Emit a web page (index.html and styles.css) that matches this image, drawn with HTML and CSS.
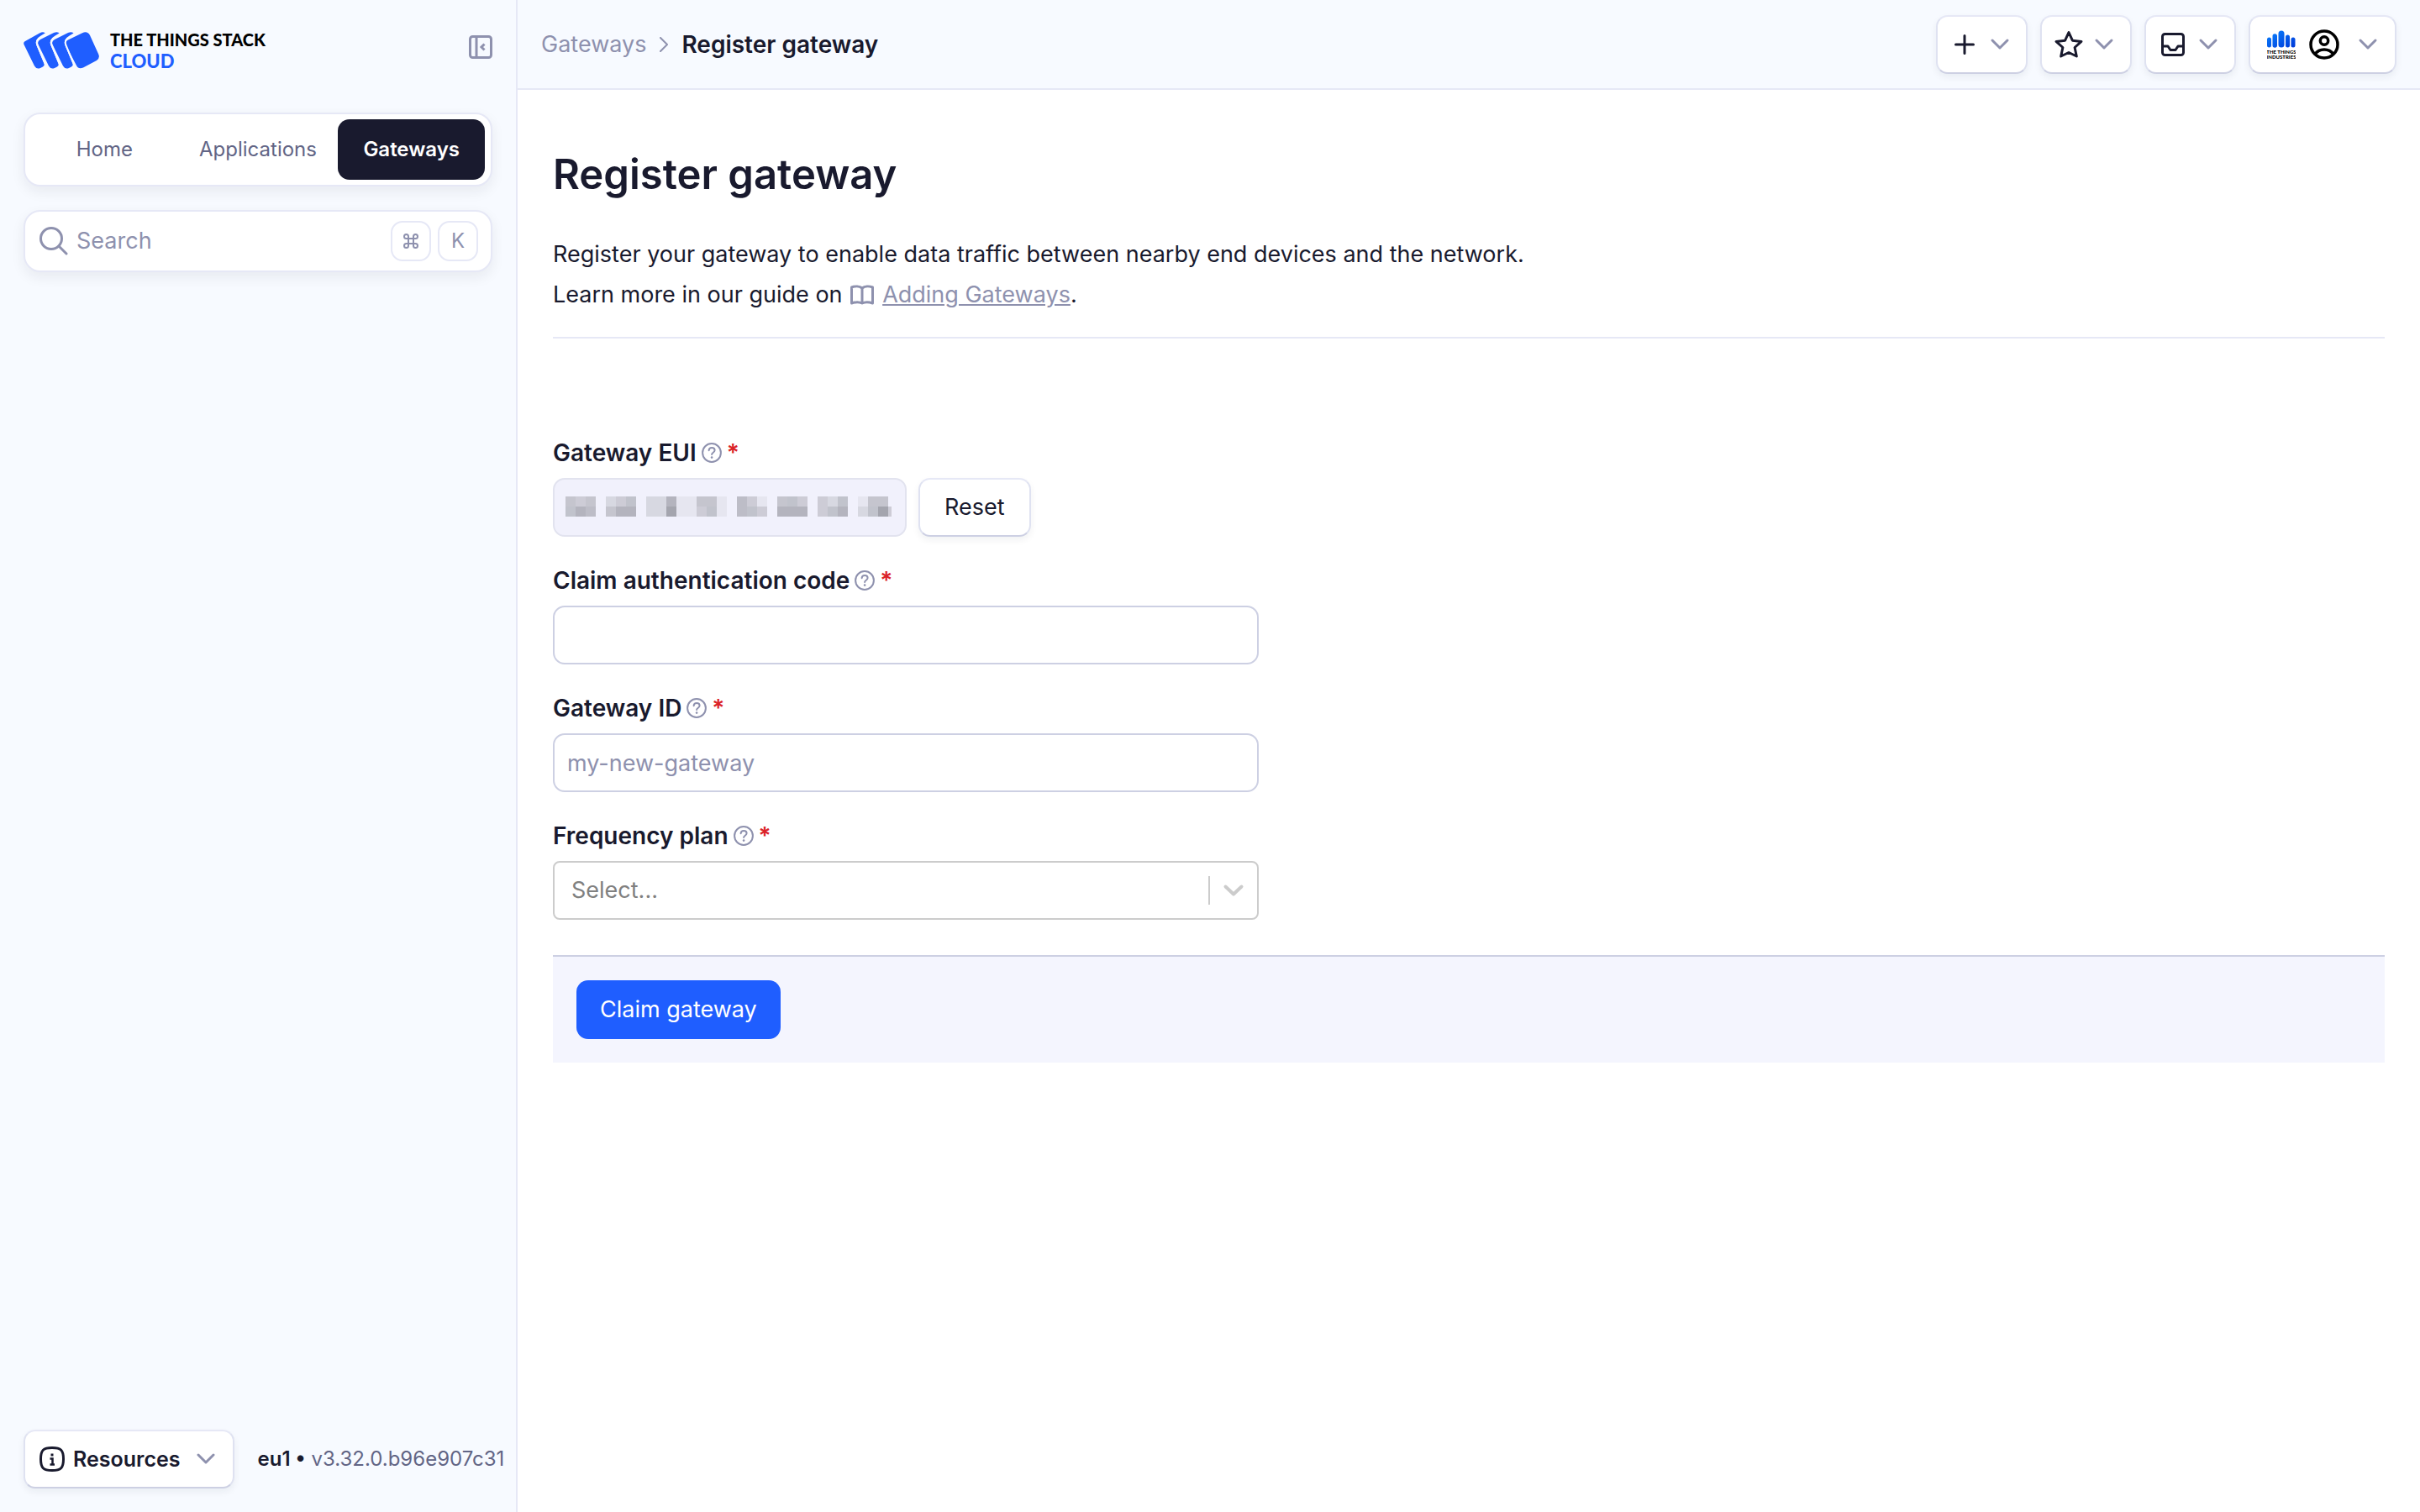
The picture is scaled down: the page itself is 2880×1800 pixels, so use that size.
FILE: index.html
```html
<!DOCTYPE html>
<html lang="en">
<head>
<meta charset="utf-8">
<meta name="viewport" content="width=device-width, initial-scale=1">
<title>Register gateway - The Things Stack Cloud</title>
<link rel="stylesheet" href="styles.css">
</head>
<body>
<svg class="defs" aria-hidden="true">
  <symbol id="chevron" viewBox="0 0 24 24"><path d="M3 7l9 9 9-9" fill="none" stroke="currentColor" stroke-width="3" stroke-linecap="round" stroke-linejoin="round"/></symbol>
  <symbol id="help" viewBox="0 0 24 24"><circle cx="12" cy="12" r="10.900" fill="none" stroke="currentColor" stroke-width="2"/><path d="M8.600 9.200c.2-2 1.600-3.100 3.500-3.100s3.500 1.200 3.500 3c0 2.600-3.500 2.700-3.500 5" fill="none" stroke="currentColor" stroke-width="2" stroke-linecap="round"/><circle cx="12.100" cy="17.600" r="1.300" fill="currentColor"/></symbol>
</svg>
<div class="layout">
  <aside class="sidebar">
    <div class="brand-row">
      <a class="brand" href="#">
        <svg class="brand-mark" viewBox="0 0 90 44" aria-hidden="true">
          <g fill="#1f5eff">
            <path d="M2 11L19 1.500Q24-1 26.500 2L19 6.500Q13 10 15.500 16L24.500 37.500Q25.500 40 23 41.500L20 43Q15.500 45 13 40.500L1 16Q-1 12.500 2 11Z"/>
            <path d="M20 9L36 1Q41-1 43 2L36 6.500Q30 10 32.500 16L41.500 37.500Q42.500 40 40 41.500L37 43Q32.500 45 30 40.500L18 16Q15.500 11.500 20 9Z"/>
            <path d="M37 9L53 1Q58-1 60 2L53 6.500Q47 10 49.500 16L58.500 37.500Q59.500 40 57 41.500L54 43Q49.500 45 47 40.500L35 16Q32.500 11.500 37 9Z"/>
            <path d="M53 9.500L70 1.200Q76-1.500 79 4L89 26Q91.500 31 87 34L71 42.500Q65.500 45 63 40L50.500 16Q48 12 53 9.500Z"/>
          </g>
          <g fill="none" stroke="#f7faff" stroke-width="2">
            <path d="M28 1L20 6Q14 9.500 16.500 16L26.500 40"/>
            <path d="M45 1L37 6Q31 9.500 33.500 16L43.500 40"/>
            <path d="M62 1L54 6Q48 9.500 50.500 16L60.500 40"/>
          </g>
        </svg>
        <span class="brand-name"><span>THE THINGS STACK</span><span class="brand-sub">CLOUD</span></span>
      </a>
      <button class="icon-button" type="button" aria-label="Collapse sidebar">
        <svg width="28" height="28" viewBox="0 0 28 28" fill="none" stroke="currentColor" stroke-width="3"><rect x="1.500" y="1.500" width="25" height="25" rx="3"/><path d="M9 2v24"/><path d="M18.500 10.500L15 14l3.500 3.500"/></svg>
      </button>
    </div>
    <nav class="tabs">
      <a href="#">Home</a><a href="#">Applications</a><a class="active" href="#">Gateways</a>
    </nav>
    <label class="search">
      <svg width="34" height="34" viewBox="0 0 34 34" fill="none" stroke="currentColor" stroke-width="3" stroke-linecap="round"><circle cx="14" cy="14" r="12.500"/><path d="M23 23l9 9"/></svg>
      <input type="text" placeholder="Search" aria-label="Search">
      <kbd><svg width="18" height="18" viewBox="0 0 18 18" fill="none" stroke="currentColor" stroke-width="2"><path d="M6 6V3.500A2.500 2.500 0 1 0 3.500 6h11A2.500 2.500 0 1 0 12 3.500v11A2.500 2.500 0 1 0 14.500 12h-11A2.500 2.500 0 1 0 6 14.500Z"/></svg></kbd>
      <kbd>K</kbd>
    </label>
    <footer class="side-foot">
      <button class="card-button resources" type="button">
        <svg width="30" height="30" viewBox="0 0 30 30" fill="none" stroke="currentColor" stroke-width="3"><path d="M15 1.500C25.500 1.500 28.500 4.500 28.500 15S25.500 28.500 15 28.500 1.500 25.500 1.500 15 4.500 1.500 15 1.500Z"/><path d="M12.500 14.500h3v7M12.500 21.500h5.500" stroke-width="2.500"/><path d="M15 8.500v3"/></svg>
        <span>Resources</span>
        <svg class="chev"><use href="#chevron"/></svg>
      </button>
      <p class="version"><b>eu1 •</b> v3.32.0.b96e907c31</p>
    </footer>
  </aside>

  <div class="page">
    <header class="topbar">
      <nav class="crumbs" aria-label="Breadcrumb">
        <a href="#">Gateways</a>
        <svg width="10" height="18" viewBox="0 0 10 18" fill="none" stroke="currentColor" stroke-width="2" stroke-linecap="round" stroke-linejoin="round"><path d="M1 1l8 8-8 8"/></svg>
        <span>Register gateway</span>
      </nav>
      <div class="actions">
        <button class="card-button" type="button" aria-label="Add">
          <svg width="36" height="36" viewBox="0 0 36 36" fill="none" stroke="currentColor" stroke-width="3" stroke-linecap="round"><path d="M18 7.500v21M7.500 18h21"/></svg>
          <svg class="chev"><use href="#chevron"/></svg>
        </button>
        <button class="card-button" type="button" aria-label="Bookmarks">
          <svg width="36" height="36" viewBox="0 0 36 36" fill="none" stroke="currentColor" stroke-width="3" stroke-linejoin="round"><path d="M18 3.500l4.400 9.700 10.600 1.200-7.900 7.100 2.200 10.500-9.300-4.500-9.300 4.500 2.200-10.500-7.900-7.100 10.600-1.200z"/></svg>
          <svg class="chev"><use href="#chevron"/></svg>
        </button>
        <button class="card-button" type="button" aria-label="Notifications">
          <svg width="36" height="36" viewBox="0 0 36 36" fill="none" stroke="currentColor" stroke-width="3" stroke-linejoin="round"><rect x="5.500" y="5.500" width="25" height="25" rx="3"/><path d="M6 20h6l3 4.500h6l3-4.500h6"/></svg>
          <svg class="chev"><use href="#chevron"/></svg>
        </button>
        <button class="card-button account" type="button" aria-label="Account">
          <svg width="34" height="34" viewBox="0 0 34 34">
            <defs><linearGradient id="bars" x1="0" y1="0" x2="1" y2="1"><stop offset="0" stop-color="#0a84ff"/><stop offset="1" stop-color="#0038d8"/></linearGradient></defs>
            <path fill="url(#bars)" d="M0 11a2.500 2.500 0 0 1 5 0v7a2.500 2.500 0 0 1-5 0zM6.500 7a2.750 2.750 0 0 1 5.500 0v11a2.750 2.750 0 0 1-5.500 0zM13.500 4a3.500 3.500 0 0 1 7 0v13a3.500 3.500 0 0 1-7 0zM22 8a2.500 2.500 0 0 1 5 0v10a2.500 2.500 0 0 1-5 0zM28.500 11a2.500 2.500 0 0 1 5 0v7a2.500 2.500 0 0 1-5 0z"/>
            <text class="mini" x="17" y="28" text-anchor="middle">THE THINGS</text><text class="mini" x="17" y="34" text-anchor="middle">INDUSTRIES</text>
          </svg>
          <svg width="36" height="36" viewBox="0 0 36 36" fill="none" stroke="#000" stroke-width="3.500"><circle cx="18" cy="18" r="16"/><circle cx="18" cy="13.500" r="4.700"/><path d="M7 29.500c2.500-3.600 6.500-5.500 11-5.500s8.500 1.900 11 5.500"/></svg>
          <svg class="chev"><use href="#chevron"/></svg>
        </button>
      </div>
    </header>

    <main class="content">
      <h1>Register gateway</h1>
      <div class="intro">
        <p>Register your gateway to enable data traffic between nearby end devices and the network.</p>
        <p>Learn more in our guide on <a href="#"><svg width="28" height="24" viewBox="0 0 28 24" fill="none" stroke="currentColor" stroke-width="3" stroke-linejoin="round"><path d="M14 4v18M14 4C11 1.500 5.500 1.500 1.500 3v19c4-1.500 9.500-1.500 12.500 0 3-1.500 8.500-1.500 12.500 0V3C22.500 1.500 17 1.500 14 4z"/></svg><span>Adding Gateways</span></a>.</p>
      </div>
      <form class="form">
        <div class="field">
          <div class="label"><label for="eui">Gateway EUI</label><svg class="help"><use href="#help"/></svg><i>*</i></div>
          <div class="eui-row">
            <div class="eui">
              <input id="eui" type="text" disabled>
              <svg class="mask" viewBox="0 0 388 24" shape-rendering="crispEdges" aria-hidden="true">
                <path fill="#c5c5ce" d="M0 0h12v12H0zM24 0h12v12H24zM156 0h24v12h-24zM252 0h12v12h-12zM360 0h24v12h-24zM48 12h12v12H48z"/>
                <path fill="#cdccd6" d="M12 0h12v12H12zM60 0h12v12H60zM216 0h12v12h-12zM276 0h12v12h-12zM300 0h12v12h-12zM156 12h12v12h-12zM228 12h12v12h-12zM300 12h12v12h-12zM384 12h4v12h-4z"/>
                <path fill="#c1c3cc" d="M0 12h12v12H0zM72 0h12v12H72zM264 0h12v12h-12zM324 0h12v12h-12zM168 12h12v12h-12zM216 12h12v12h-12zM360 12h12v12h-12zM312 12h12v12h-12z"/>
                <path fill="#b4b4be" d="M12 12h12v12H12zM60 12h24v12H60zM120 0h12v12h-12zM252 12h36v12h-36zM324 12h12v12h-12z"/>
                <path fill="#bdbdc7" d="M24 12h12v12H24zM204 0h12v24h-12z"/>
                <path fill="#a4a5ae" d="M120 12h12v12h-12zM372 12h12v12h-12z"/>
                <path fill="#d7d8e1" d="M48 0h12v12H48zM96 0h24v24H96zM312 0h12v12h-12zM348 12h12v12h-12z"/>
                <path fill="#e6e6f0" d="M132 0h24v24h-24zM180 0h12v24h-12zM228 0h12v12h-12zM348 0h12v12h-12z"/>
              </svg>
            </div>
            <button class="card-button reset" type="button">Reset</button>
          </div>
        </div>
        <div class="field">
          <div class="label"><label for="code">Claim authentication code</label><svg class="help"><use href="#help"/></svg><i>*</i></div>
          <input id="code" type="text">
        </div>
        <div class="field">
          <div class="label"><label for="gid">Gateway ID</label><svg class="help"><use href="#help"/></svg><i>*</i></div>
          <input id="gid" type="text" placeholder="my-new-gateway">
        </div>
        <div class="field">
          <div class="label"><label for="plan">Frequency plan</label><svg class="help"><use href="#help"/></svg><i>*</i></div>
          <div class="select">
            <select id="plan"><option>Select...</option></select>
            <span class="indicator"><svg viewBox="0 0 28 28"><path d="M4.500 9.500l9.500 9 9.500-9" fill="none" stroke="currentColor" stroke-width="4" stroke-linecap="round" stroke-linejoin="round"/></svg></span>
          </div>
        </div>
        <div class="submit-bar"><button class="primary" type="submit">Claim gateway</button></div>
      </form>
    </main>
  </div>
</div>
</body>
</html>
```
FILE: styles.css
```css
* { box-sizing: border-box; }

body {
  margin: 0;
  background: #fff;
  color: #191a2e;
  font: 27px/48px Inter, "Liberation Sans", sans-serif;
}

p, h1 { margin: 0; }
a { color: inherit; text-decoration: none; }
svg { display: block; flex: none; }
button, input, select { font: inherit; color: inherit; }
button { cursor: pointer; }
.defs { display: none; }

.layout {
  display: grid;
  grid-template-columns: 616px minmax(0, 1fr);
  min-height: 100vh;
}

/* Sidebar */
.sidebar {
  display: flex;
  flex-direction: column;
  padding: 28px;
  background: #f7faff;
  border-right: 2px solid #e6e8f6;
}

.brand-row {
  display: flex;
  justify-content: space-between;
  align-items: center;
  height: 56px;
  margin-bottom: 50px;
}
.brand { display: flex; align-items: center; gap: 13px; }
.brand-mark { width: 90px; height: 44px; margin-top: 8px; }
.brand-name {
  display: flex;
  flex-direction: column;
  margin-top: 8px;
  color: #000;
  font: 900 20px/25px Lato, sans-serif;
}
.brand-sub { color: #1f5eff; font-size: 22px; }
.icon-button {
  padding: 0;
  border: 0;
  background: none;
  color: #8e91ae;
}

.tabs, .search {
  display: flex;
  align-items: center;
  background: #fff;
  border: 2px solid #e6e8f6;
  border-radius: 20px;
  box-shadow: 0 6px 16px rgba(25, 26, 46, .07);
}
.tabs { height: 88px; padding: 7px; gap: 8px; margin-bottom: 28px; }
.tabs a {
  flex: 1 1 0;
  padding: 12px 0;
  border-radius: 14px;
  color: #626585;
  font-size: 24px;
  text-align: center;
}
.tabs a.active {
  background: #191a2e;
  color: #fff;
  font-weight: 600;
}

.search { height: 74px; padding: 0 15px 0 17px; gap: 8px; color: #8e91ae; }
.search input {
  flex: 1;
  min-width: 0;
  padding: 0 2px;
  border: 0;
  background: none;
}
input::placeholder { color: #8e91ae; opacity: 1; }
kbd {
  display: grid;
  place-items: center;
  width: 48px;
  height: 48px;
  border: 2px solid #e6e8f6;
  border-radius: 14px;
  font: 24px/24px Inter, sans-serif;
}

.side-foot {
  display: flex;
  align-items: center;
  gap: 28px;
  margin: auto -20px 0 0;
  font-size: 24px;
  white-space: nowrap;
}
.version { color: #626585; }
.version b { color: #191a2e; font-weight: 600; }

/* Raised white buttons */
.card-button {
  display: flex;
  align-items: center;
  height: 70px;
  padding: 0 18px;
  background: #fff;
  border: 2px solid #dfe2f1;
  border-top-color: #e6e8f6;
  border-bottom-color: #cdd0e3;
  border-radius: 14px;
  box-shadow: 0 4px 8px rgba(25, 26, 46, .06);
}
.chev { width: 24px; height: 24px; color: #8e91ae; }
.resources { gap: 10px; padding: 0 20px 0 17px; font-size: 25px; font-weight: 600; }
.resources .chev { margin-left: 8px; }

/* Top bar */
.topbar {
  display: flex;
  justify-content: space-between;
  align-items: center;
  height: 107px;
  padding: 0 28px;
  background: #f7faff;
  border-bottom: 2px solid #e6e8f6;
}
.crumbs { display: flex; align-items: center; gap: 16px; color: #8e91ae; }
.crumbs span { color: #191a2e; font-size: 28px; font-weight: 600; }
.actions { display: flex; gap: 15px; }
.actions .card-button { justify-content: space-between; width: 109px; padding: 0 19px 0 14px; }
.actions .account { width: 176px; padding: 0 20px; }
.account .chev { margin-left: 6px; }
.mini { font: 900 6px Lato, sans-serif; }

/* Content */
.content { padding: 66px 42px; }
h1 { margin-bottom: 36px; font-size: 49px; line-height: 70px; font-weight: 600; }
.intro {
  padding-bottom: 26px;
  border-bottom: 2px solid #e6e8f6;
}
.intro a { color: #8e91ae; }
.intro svg { display: inline-block; vertical-align: -3px; margin: 0 10px 0 2px; }
.intro a span { text-decoration: underline; }

.form { padding-top: 118px; }
.field { max-width: 840px; margin-bottom: 34px; }
.label {
  display: flex;
  align-items: center;
  gap: 6px;
  height: 36px;
  margin-bottom: 12px;
  font-size: 28px;
  font-weight: 600;
}
.help { width: 24px; height: 24px; color: #8e91ae; }
.label i { color: #db2328; font-style: normal; }

.field input, .field select {
  display: block;
  width: 100%;
  height: 70px;
  padding: 0 15px;
  background: #fff;
  border: 2px solid #cdd0e3;
  border-radius: 14px;
}
.eui-row { display: flex; gap: 14px; }
.eui { position: relative; width: 421px; }
.field .eui input { background: #f1f1fc; border-color: #e2e3ef; }
.mask { position: absolute; left: 15px; top: 22px; width: 388px; height: 24px; }
.reset { padding: 0 29px; }

.select { position: relative; }
.field select {
  appearance: none;
  padding: 0 20px;
  border-color: #ccc;
  border-radius: 8px;
  color: #808080;
}
.indicator {
  position: absolute;
  inset: 18px 2px 18px auto;
  display: grid;
  place-items: center;
  width: 58px;
  border-left: 2px solid #ccc;
  color: #ccc;
  pointer-events: none;
}
.indicator svg { width: 28px; height: 28px; }

.submit-bar {
  margin-top: 42px;
  padding: 28px;
  background: #f4f5fe;
  border-top: 2px solid #cdd0e3;
}
.primary {
  height: 70px;
  padding: 0 28px;
  border: 0;
  border-radius: 14px;
  background: #1f5eff;
  color: #fff;
}
```
